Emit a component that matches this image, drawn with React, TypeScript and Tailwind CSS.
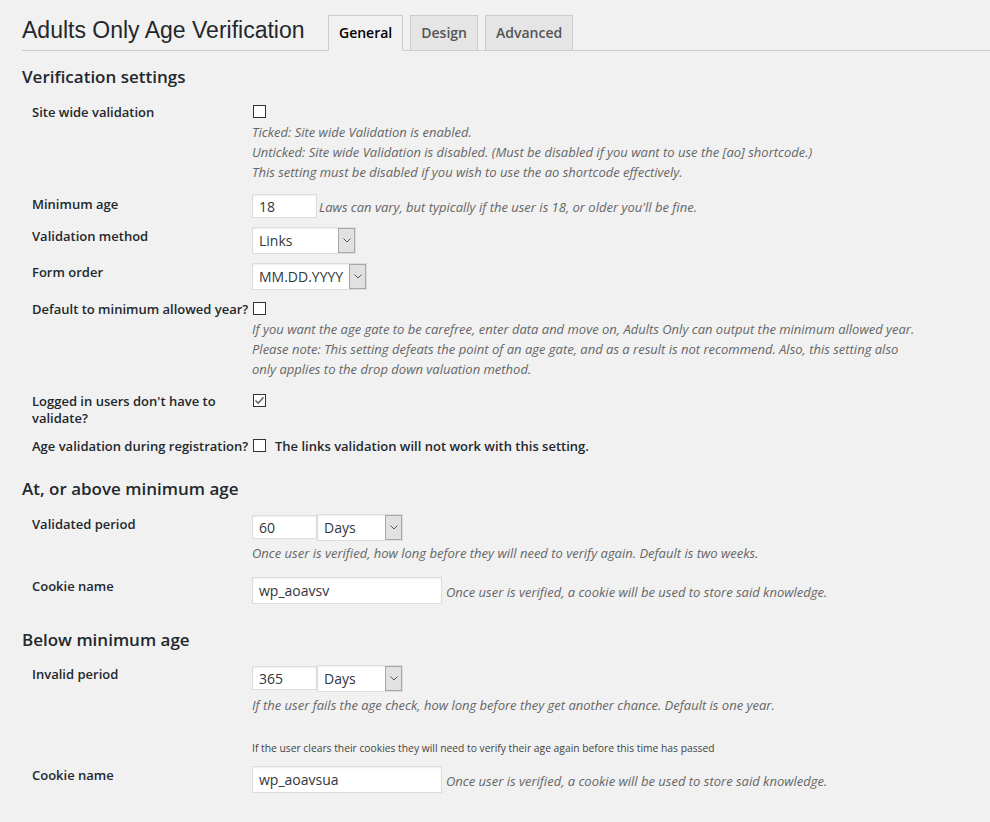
import React, { FC, ReactNode } from 'react';

const Checkbox: FC<{ checked?: boolean; className?: string }> = ({ checked, className = '' }) => (
  <span
    className={`flex h-[13px] w-[13px] shrink-0 items-center justify-center border border-[#333] bg-white ${className}`}
  >
    {checked && (
      <svg width="11" height="11" viewBox="0 0 11 11" fill="none">
        <path d="M1.5 5.5 L4.2 8.2 L9.5 2.2" stroke="#555" strokeWidth="1.3" />
      </svg>
    )}
  </span>
);

const Select: FC<{ value: string; width: string }> = ({ value, width }) => (
  <div className={`flex h-[27px] ${width} items-stretch border border-[#ddd] bg-white shadow-[inset_0_1px_2px_rgba(0,0,0,0.07)]`}>
    <span className="flex flex-1 items-center pl-[6px] text-[14px] text-[#32373c]">{value}</span>
    <span className="flex w-[17px] items-center justify-center border border-[#a7a7a7] bg-[#e1e1e1]">
      <svg width="8" height="5" viewBox="0 0 8 5" fill="none">
        <path d="M0.5 0.5 L4 4 L7.5 0.5" stroke="#555" strokeWidth="1" />
      </svg>
    </span>
  </div>
);

const TextInput: FC<{ value: string; width: string; height?: string; className?: string }> = ({
  value,
  width,
  height = 'h-[24px]',
  className = '',
}) => (
  <div
    className={`flex ${height} ${width} shrink-0 items-center border border-[#ddd] bg-white pl-[6px] text-[14px] text-[#32373c] shadow-[inset_0_1px_2px_rgba(0,0,0,0.07)] ${className}`}
  >
    {value}
  </div>
);

const Desc: FC<{ children: ReactNode; className?: string }> = ({ children, className = '' }) => (
  <p className={`max-w-[668px] text-[13px] leading-[20px] italic text-[#666] ${className}`}>{children}</p>
);

const Row: FC<{ label: ReactNode; labelClass?: string; className?: string; children: ReactNode }> = ({
  label,
  labelClass = '',
  className = '',
  children,
}) => (
  <div className={`flex items-start ${className}`}>
    <div className={`w-[230px] shrink-0 pl-[10px] pt-[1px] text-[13px] leading-[17px] font-semibold text-[#23282d] ${labelClass}`}>
      <div className="w-[220px]">{label}</div>
    </div>
    <div className="flex-1">{children}</div>
  </div>
);

const Heading: FC<{ children: ReactNode; className?: string }> = ({ children, className = '' }) => (
  <h2 className={`text-[17px] leading-[24px] font-semibold text-[#23282d] ${className}`}>{children}</h2>
);

export default function App() {
  const tabs = ['General', 'Design', 'Advanced'];

  return (
    <div className="min-h-[822px] w-[990px] overflow-hidden bg-[#f1f1f1] pl-[22px] font-['Open_Sans',sans-serif] text-[#444]">
      <div className="flex items-start border-b border-[#ccc] pt-[15px]">
        <h1 className="w-[299px] shrink-0 font-['Liberation_Sans',Arial,sans-serif] text-[23px] leading-[30px] text-[#23282d]">
          Adults Only Age Verification
        </h1>
        {tabs.map((t, i) => (
          <span
            key={t}
            className={`-mb-px ml-[7px] h-[36px] border px-[10px] text-[14px] leading-[34px] font-semibold ${
              i === 0
                ? 'border-[#ccc] border-b-[#f1f1f1] bg-[#f1f1f1] text-black'
                : 'border-[#ccc] bg-[#e5e5e5] text-[#555]'
            }`}
          >
            {t}
          </span>
        ))}
      </div>

      <Heading className="mt-[14px]">Verification settings</Heading>

      <Row label="Site wide validation" className="mt-[14px]">
        <Checkbox className="ml-[1px] mt-[2px]" />
        <Desc className="mt-[4px]">
          Ticked: Site wide Validation is enabled.
          <br />
          Unticked: Site wide Validation is disabled. (Must be disabled if you want to use the [ao] shortcode.)
          <br />
          This setting must be disabled if you wish to use the ao shortcode effectively.
        </Desc>
      </Row>

      <Row label="Minimum age" labelClass="mt-[1px]" className="mt-[12px]">
        <div className="flex items-center">
          <TextInput value="18" width="w-[65px]" />
          <Desc className="ml-[2px] mt-[2px]">Laws can vary, but typically if the user is 18, or older you'll be fine.</Desc>
        </div>
      </Row>

      <Row label="Validation method" className="mt-[9px]">
        <Select value="Links" width="w-[104px]" />
      </Row>

      <Row label="Form order" className="mt-[9px]">
        <Select value="MM.DD.YYYY" width="w-[115px]" />
      </Row>

      <Row label="Default to minimum allowed year?" className="mt-[10px]">
        <Checkbox className="ml-[1px] mt-[2px]" />
        <Desc className="mt-[4px]">
          If you want the age gate to be carefree, enter data and move on, Adults Only can output the minimum allowed year.
          <br />
          Please note: This setting defeats the point of an age gate, and as a result is not recommend. Also, this setting also only applies to the drop down valuation method.
        </Desc>
      </Row>

      <Row label="Logged in users don't have to validate?" className="mt-[13px]">
        <Checkbox checked className="ml-[1px] mt-[2px]" />
      </Row>

      <Row label="Age validation during registration?" className="mt-[10px]">
        <div className="flex items-start">
          <Checkbox className="ml-[1px] mt-[2px]" />
          <span className="ml-[9px] pt-[1px] text-[13px] leading-[17px] font-semibold text-[#23282d]">
            The links validation will not work with this setting.
          </span>
        </div>
      </Row>

      <Heading className="mt-[22px]">At, or above minimum age</Heading>

      <Row label="Validated period" labelClass="mt-[1px]" className="mt-[13px]">
        <div className="flex items-start">
          <TextInput value="60" width="w-[65px]" className="mt-[1px]" />
          <Select value="Days" width="w-[86px]" />
        </div>
        <Desc className="mt-[2px]">Once user is verified, how long before they will need to verify again. Default is two weeks.</Desc>
      </Row>

      <Row label="Cookie name" className="mt-[14px]">
        <div className="flex items-center">
          <TextInput value="wp_aoavsv" width="w-[190px]" height="h-[27px]" />
          <Desc className="ml-[4px] mt-[2px]">Once user is verified, a cookie will be used to store said knowledge.</Desc>
        </div>
      </Row>

      <Heading className="mt-[24px]">Below minimum age</Heading>

      <Row label="Invalid period" className="mt-[13px]">
        <div className="flex items-start">
          <TextInput value="365" width="w-[65px]" className="mt-[1px]" />
          <Select value="Days" width="w-[86px]" />
        </div>
        <Desc className="mt-[3px]">If the user fails the age check, how long before they get another chance. Default is one year.</Desc>
        <p className="mt-[26px] text-[10.3px] leading-[14px] text-[#444]">
          If the user clears their cookies they will need to verify their age again before this time has passed
        </p>
      </Row>

      <Row label="Cookie name" className="mt-[11px]">
        <div className="flex items-center">
          <TextInput value="wp_aoavsua" width="w-[190px]" height="h-[27px]" />
          <Desc className="ml-[4px] mt-[2px]">Once user is verified, a cookie will be used to store said knowledge.</Desc>
        </div>
      </Row>
    </div>
  );
}
